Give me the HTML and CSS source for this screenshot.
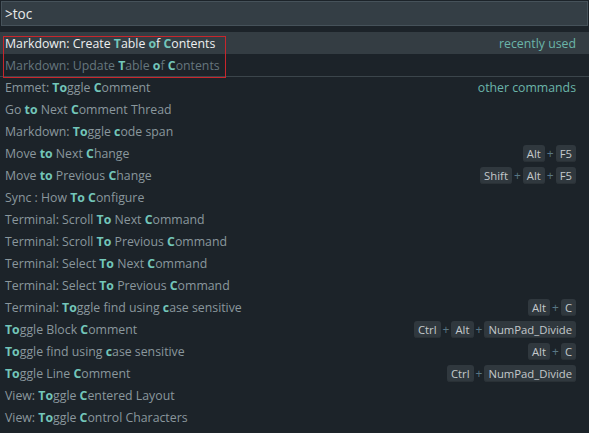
FILE: index.html
```html
<!DOCTYPE html>
<html>
<head>
<meta charset="utf-8">
<link rel="stylesheet" href="styles.css">
</head>
<body>
<div class="quick">
  <div class="input">&gt;toc</div>
  <div class="list">
    <div class="row selected"><span class="label">Markdown: Create <b>T</b>able <b>o</b>f <b>C</b>ontents</span><span class="group">recently used</span></div>
    <div class="row dim"><span class="label">Markdown: Update <b>T</b>able <b>o</b>f <b>C</b>ontents</span></div>
    <div class="row sep"><span class="label">Emmet: <b>To</b>ggle <b>C</b>omment</span><span class="group">other commands</span></div>
    <div class="row"><span class="label">Go <b>to</b> Next <b>C</b>omment Thread</span></div>
    <div class="row"><span class="label">Markdown: <b>To</b>ggle <b>c</b>ode span</span></div>
    <div class="row"><span class="label">Move <b>to</b> Next <b>C</b>hange</span><span class="keys"><kbd>Alt</kbd><i>+</i><kbd>F5</kbd></span></div>
    <div class="row"><span class="label">Move <b>to</b> Previous <b>C</b>hange</span><span class="keys"><kbd>Shift</kbd><i>+</i><kbd>Alt</kbd><i>+</i><kbd>F5</kbd></span></div>
    <div class="row"><span class="label">Sync : How <b>To</b> <b>C</b>onfigure</span></div>
    <div class="row"><span class="label">Terminal: Scroll <b>To</b> Next <b>C</b>ommand</span></div>
    <div class="row"><span class="label">Terminal: Scroll <b>To</b> Previous <b>C</b>ommand</span></div>
    <div class="row"><span class="label">Terminal: Select <b>To</b> Next <b>C</b>ommand</span></div>
    <div class="row"><span class="label">Terminal: Select <b>To</b> Previous <b>C</b>ommand</span></div>
    <div class="row"><span class="label">Terminal: <b>To</b>ggle find using <b>c</b>ase sensitive</span><span class="keys"><kbd>Alt</kbd><i>+</i><kbd>C</kbd></span></div>
    <div class="row"><span class="label"><b>To</b>ggle Block <b>C</b>omment</span><span class="keys"><kbd>Ctrl</kbd><i>+</i><kbd>Alt</kbd><i>+</i><kbd>NumPad_Divide</kbd></span></div>
    <div class="row"><span class="label"><b>To</b>ggle find using <b>c</b>ase sensitive</span><span class="keys"><kbd>Alt</kbd><i>+</i><kbd>C</kbd></span></div>
    <div class="row"><span class="label"><b>To</b>ggle Line <b>C</b>omment</span><span class="keys"><kbd>Ctrl</kbd><i>+</i><kbd>NumPad_Divide</kbd></span></div>
    <div class="row"><span class="label">View: <b>To</b>ggle <b>C</b>entered Layout</span></div>
    <div class="row"><span class="label">View: <b>To</b>ggle <b>C</b>ontrol Characters</span></div>
  </div>
  <div class="focus-ring"></div>
</div>
</body>
</html>
```
FILE: styles.css
```css
html, body {
  margin: 0;
  padding: 0;
  background: #1c2329;
  width: 589px;
  height: 433px;
  overflow: hidden;
}
.quick {
  position: relative;
  font-family: "Open Sans", "Noto Sans", sans-serif;
  font-size: 12.3px;
}
.input {
  margin: 1px 1px 0 1px;
  height: 23px;
  border: 1px solid #46525a;
  background: #343e45;
  color: #e6e8e9;
  font-size: 13.6px;
  line-height: 23px;
  padding-left: 3px;
}
.list {
  margin-top: 6px;
}
.row {
  height: 22px;
  display: flex;
  align-items: center;
  justify-content: space-between;
  padding: 0 13px 0 5px;
  color: #8a979d;
  white-space: nowrap;
}
.row b {
  color: #73c6ba;
  font-weight: 700;
}
.row.selected {
  background: #343d43;
  color: #eef0f1;
}
.row.dim {
  color: #66767d;
}
.row.sep {
  border-top: 1px solid #3b454b;
  height: 21px;
}
.group {
  color: #6bb5a9;
}
.keys {
  display: flex;
  align-items: center;
}
.keys kbd {
  font-family: "Open Sans", "Noto Sans", sans-serif;
  font-size: 11.3px;
  height: 17px;
  line-height: 17px;
  padding: 0 4px;
  background: #30383e;
  border-radius: 3px;
  color: #c4c9cc;
  box-shadow: inset 0 -1px 0 #2a3136;
}
.keys i {
  font-style: normal;
  color: #587685;
  font-size: 12px;
  margin: 0 2px;
}
.focus-ring {
  position: absolute;
  left: 3px;
  top: 35px;
  width: 221px;
  height: 40px;
  border: 1px solid #c8262c;
}
```
